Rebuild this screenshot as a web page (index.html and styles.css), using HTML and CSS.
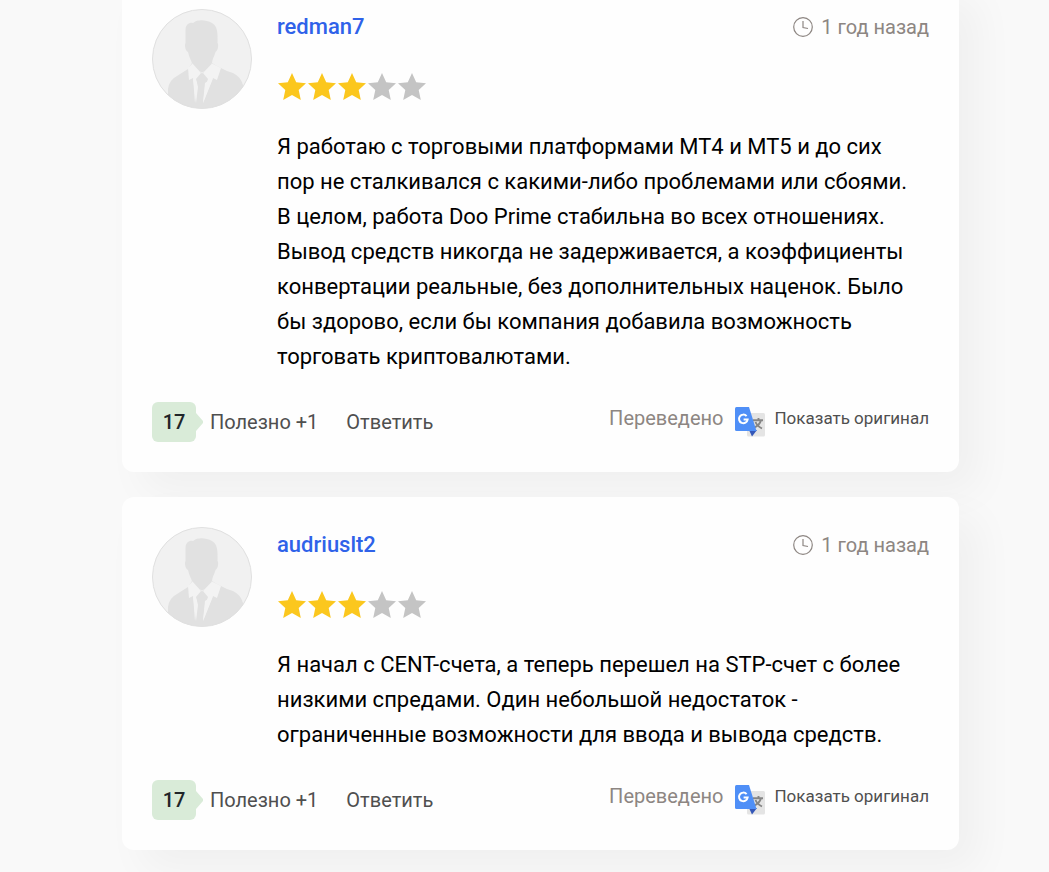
FILE: index.html
```html
<!DOCTYPE html>
<html lang="ru">
<head>
<meta charset="utf-8">
<meta name="viewport" content="width=device-width, initial-scale=1">
<title>Отзывы</title>
<link rel="stylesheet" href="styles.css">
</head>
<body>
<svg class="sprite" aria-hidden="true">
  <symbol id="avatar" viewBox="0 0 100 100">
    <clipPath id="avatar-clip"><circle cx="50" cy="50" r="49.500"/></clipPath>
    <circle cx="50" cy="50" r="49.500" fill="#f1f1f1"/>
    <g clip-path="url(#avatar-clip)" fill="#e1e1e1">
      <path d="M33.500 21C33.500 15 38 13 41 14C46 10 54 11 60 14C65 17 66 22 65.500 34C67 35 66 42 63.500 43C62 48 60 51 60 54C57 59 54 62 50 63.500C46 62 43 59 40 54C39 51 37 48 36 43C33 42 32.500 35 33.500 34Z"/>
      <path d="M40 54L50 64.500L60 54L65 57L75 62L81 64Q89 68 91 76L92 101H16L16 80Q17 71 25 67L36 60Z"/>
    </g>
    <g clip-path="url(#avatar-clip)">
      <path d="M40.500 54.500L49 64L44 70L46 78L44 94L41 69L37 71L36 59Z" fill="#f3f3f3"/>
      <path d="M60 54.500L51 64L56 70L53 78L51 94L61 69L65 71L69 59Z" fill="#f3f3f3"/>
      <path d="M45 73L43 94L41 69ZM53 74L51 94L61 69Z" fill="#f3f3f3"/>
    </g>
    <circle cx="50" cy="50" r="49.500" fill="none" stroke="#e0e0e0"/>
  </symbol>
  <symbol id="star" viewBox="0 0 30 28">
    <path d="M15 0L19.200 9.300L29 10.300L21.700 17L23.800 27L15 22L6.200 27L8.300 17L1 10.300L10.800 9.300Z" fill="currentColor"/>
  </symbol>
  <symbol id="clock" viewBox="0 0 20 20">
    <g fill="none" stroke="currentColor" stroke-width="1.200"><circle cx="10" cy="10" r="9.300"/><path d="M10 4V10.500L15 11.500"/></g>
  </symbol>
  <symbol id="translate" viewBox="0 0 30 30">
    <rect x="12" y="6" width="18" height="23.500" rx="1.500" fill="#e4e4e4"/>
    <path d="M18 13.200H28M23.500 11V13M26 13Q25 18 18 21.500M20.500 15Q22 19 27 21.500" fill="none" stroke="#858585" stroke-width="1.900"/>
    <path d="M14 23H22L17 29.500Z" fill="#3457b8"/>
    <path d="M1.500 0H14L21.500 24H1.500Q0 24 0 22.500V1.500Q0 0 1.500 0Z" fill="#4f8ff7"/>
    <path d="M11.600 9.100A4.300 4.300 0 1 0 12.600 12.600H8.600" fill="none" stroke="#fff" stroke-width="2"/>
  </symbol>
</svg>

<main class="reviews">
  <article class="card">
    <svg class="avatar" role="img" aria-label="redman7"><use href="#avatar"/></svg>
    <div class="content">
      <header class="head">
        <a class="name" href="#">redman7</a>
        <time class="date"><svg class="clock" aria-hidden="true"><use href="#clock"/></svg>1 год назад</time>
      </header>
      <div class="stars" role="img" aria-label="3 из 5">
        <svg class="star on"><use href="#star"/></svg><svg class="star on"><use href="#star"/></svg><svg class="star on"><use href="#star"/></svg><svg class="star"><use href="#star"/></svg><svg class="star"><use href="#star"/></svg>
      </div>
      <p class="text">Я работаю с торговыми платформами MT4 и MT5 и до сих пор не сталкивался с какими-либо проблемами или сбоями. В целом, работа Doo Prime стабильна во всех отношениях. Вывод средств никогда не задерживается, а коэффициенты конвертации реальные, без дополнительных наценок. Было бы здорово, если бы компания добавила возможность торговать криптовалютами.</p>
    </div>
    <footer class="foot">
      <div class="actions">
        <span class="count">17</span>
        <button class="action" type="button">Полезно +1</button>
        <button class="action" type="button">Ответить</button>
      </div>
      <div class="translation">
        <span class="translated">Переведено</span>
        <svg class="translate" aria-hidden="true"><use href="#translate"/></svg>
        <button class="original" type="button">Показать оригинал</button>
      </div>
    </footer>
  </article>

  <article class="card">
    <svg class="avatar" role="img" aria-label="audriuslt2"><use href="#avatar"/></svg>
    <div class="content">
      <header class="head">
        <a class="name" href="#">audriuslt2</a>
        <time class="date"><svg class="clock" aria-hidden="true"><use href="#clock"/></svg>1 год назад</time>
      </header>
      <div class="stars" role="img" aria-label="3 из 5">
        <svg class="star on"><use href="#star"/></svg><svg class="star on"><use href="#star"/></svg><svg class="star on"><use href="#star"/></svg><svg class="star"><use href="#star"/></svg><svg class="star"><use href="#star"/></svg>
      </div>
      <p class="text">Я начал с CENT-счета, а теперь перешел на STP-счет с более низкими спредами. Один небольшой недостаток - ограниченные возможности для ввода и вывода средств.</p>
    </div>
    <footer class="foot">
      <div class="actions">
        <span class="count">17</span>
        <button class="action" type="button">Полезно +1</button>
        <button class="action" type="button">Ответить</button>
      </div>
      <div class="translation">
        <span class="translated">Переведено</span>
        <svg class="translate" aria-hidden="true"><use href="#translate"/></svg>
        <button class="original" type="button">Показать оригинал</button>
      </div>
    </footer>
  </article>
</main>
</body>
</html>
```

FILE: styles.css
```css
* {
  box-sizing: border-box;
}

body {
  margin: 0;
  background: #f9f9f9;
  font-family: Roboto, "Liberation Sans", sans-serif;
  color: #000;
  overflow-x: hidden;
}

svg {
  display: block;
  flex: none;
}

button {
  padding: 0;
  border: 0;
  background: none;
  font: inherit;
  color: inherit;
  cursor: pointer;
}

.sprite {
  position: absolute;
  width: 0;
  height: 0;
}

.reviews {
  display: grid;
  gap: 25px;
  margin-top: -21px;
  padding: 0 90px 22px 122px;
}

.card {
  display: grid;
  grid-template-columns: 100px 1fr;
  gap: 28px 25px;
  padding: 30px;
  border-radius: 12px;
  background: #fefefe;
  box-shadow: 20px 20px 40px rgba(0, 0, 0, 0.04);
}

.avatar {
  width: 100px;
  height: 100px;
}

.content {
  display: grid;
  gap: 28px;
}

.head {
  display: flex;
  justify-content: space-between;
  line-height: 36px;
}

.name {
  font-size: 22px;
  font-weight: 500;
  color: #2f62e9;
  text-decoration: none;
}

.date {
  display: flex;
  align-items: center;
  gap: 8px;
  font-size: 20px;
  color: #8d8682;
}

.clock {
  width: 20px;
  height: 20px;
}

.stars {
  display: flex;
  color: #c4c4c4;
}

.star {
  width: 30px;
  height: 28px;
}

.on {
  color: #fbc71e;
}

.text {
  margin: 0;
  padding-right: 8px;
  font-size: 22px;
  line-height: 35px;
}

.foot {
  grid-column: 1 / -1;
  display: flex;
  justify-content: space-between;
  align-items: flex-start;
}

.actions {
  display: flex;
  align-items: center;
  font-size: 20px;
  color: #4f4f4f;
}

.count {
  position: relative;
  width: 44px;
  margin-right: 14px;
  border-radius: 6px;
  background: #d9ebd8;
  font-weight: 500;
  line-height: 40px;
  text-align: center;
  color: #212529;
}

.count::after {
  content: "";
  position: absolute;
  top: 11px;
  left: 100%;
  width: 7px;
  height: 18px;
  background: #d9ebd8;
  clip-path: polygon(0 0, 100% 45%, 100% 55%, 0 100%);
}

.action + .action {
  margin-left: 28px;
}

.translation {
  display: flex;
  align-items: flex-start;
  line-height: 32px;
}

.translated {
  margin-right: 12px;
  font-size: 20px;
  color: #8d8682;
}

.translate {
  width: 30px;
  height: 30px;
  margin: 5px 9px 0 0;
}

.original {
  font-size: 17px;
  line-height: 32px;
  color: #4f4f4f;
}
```
